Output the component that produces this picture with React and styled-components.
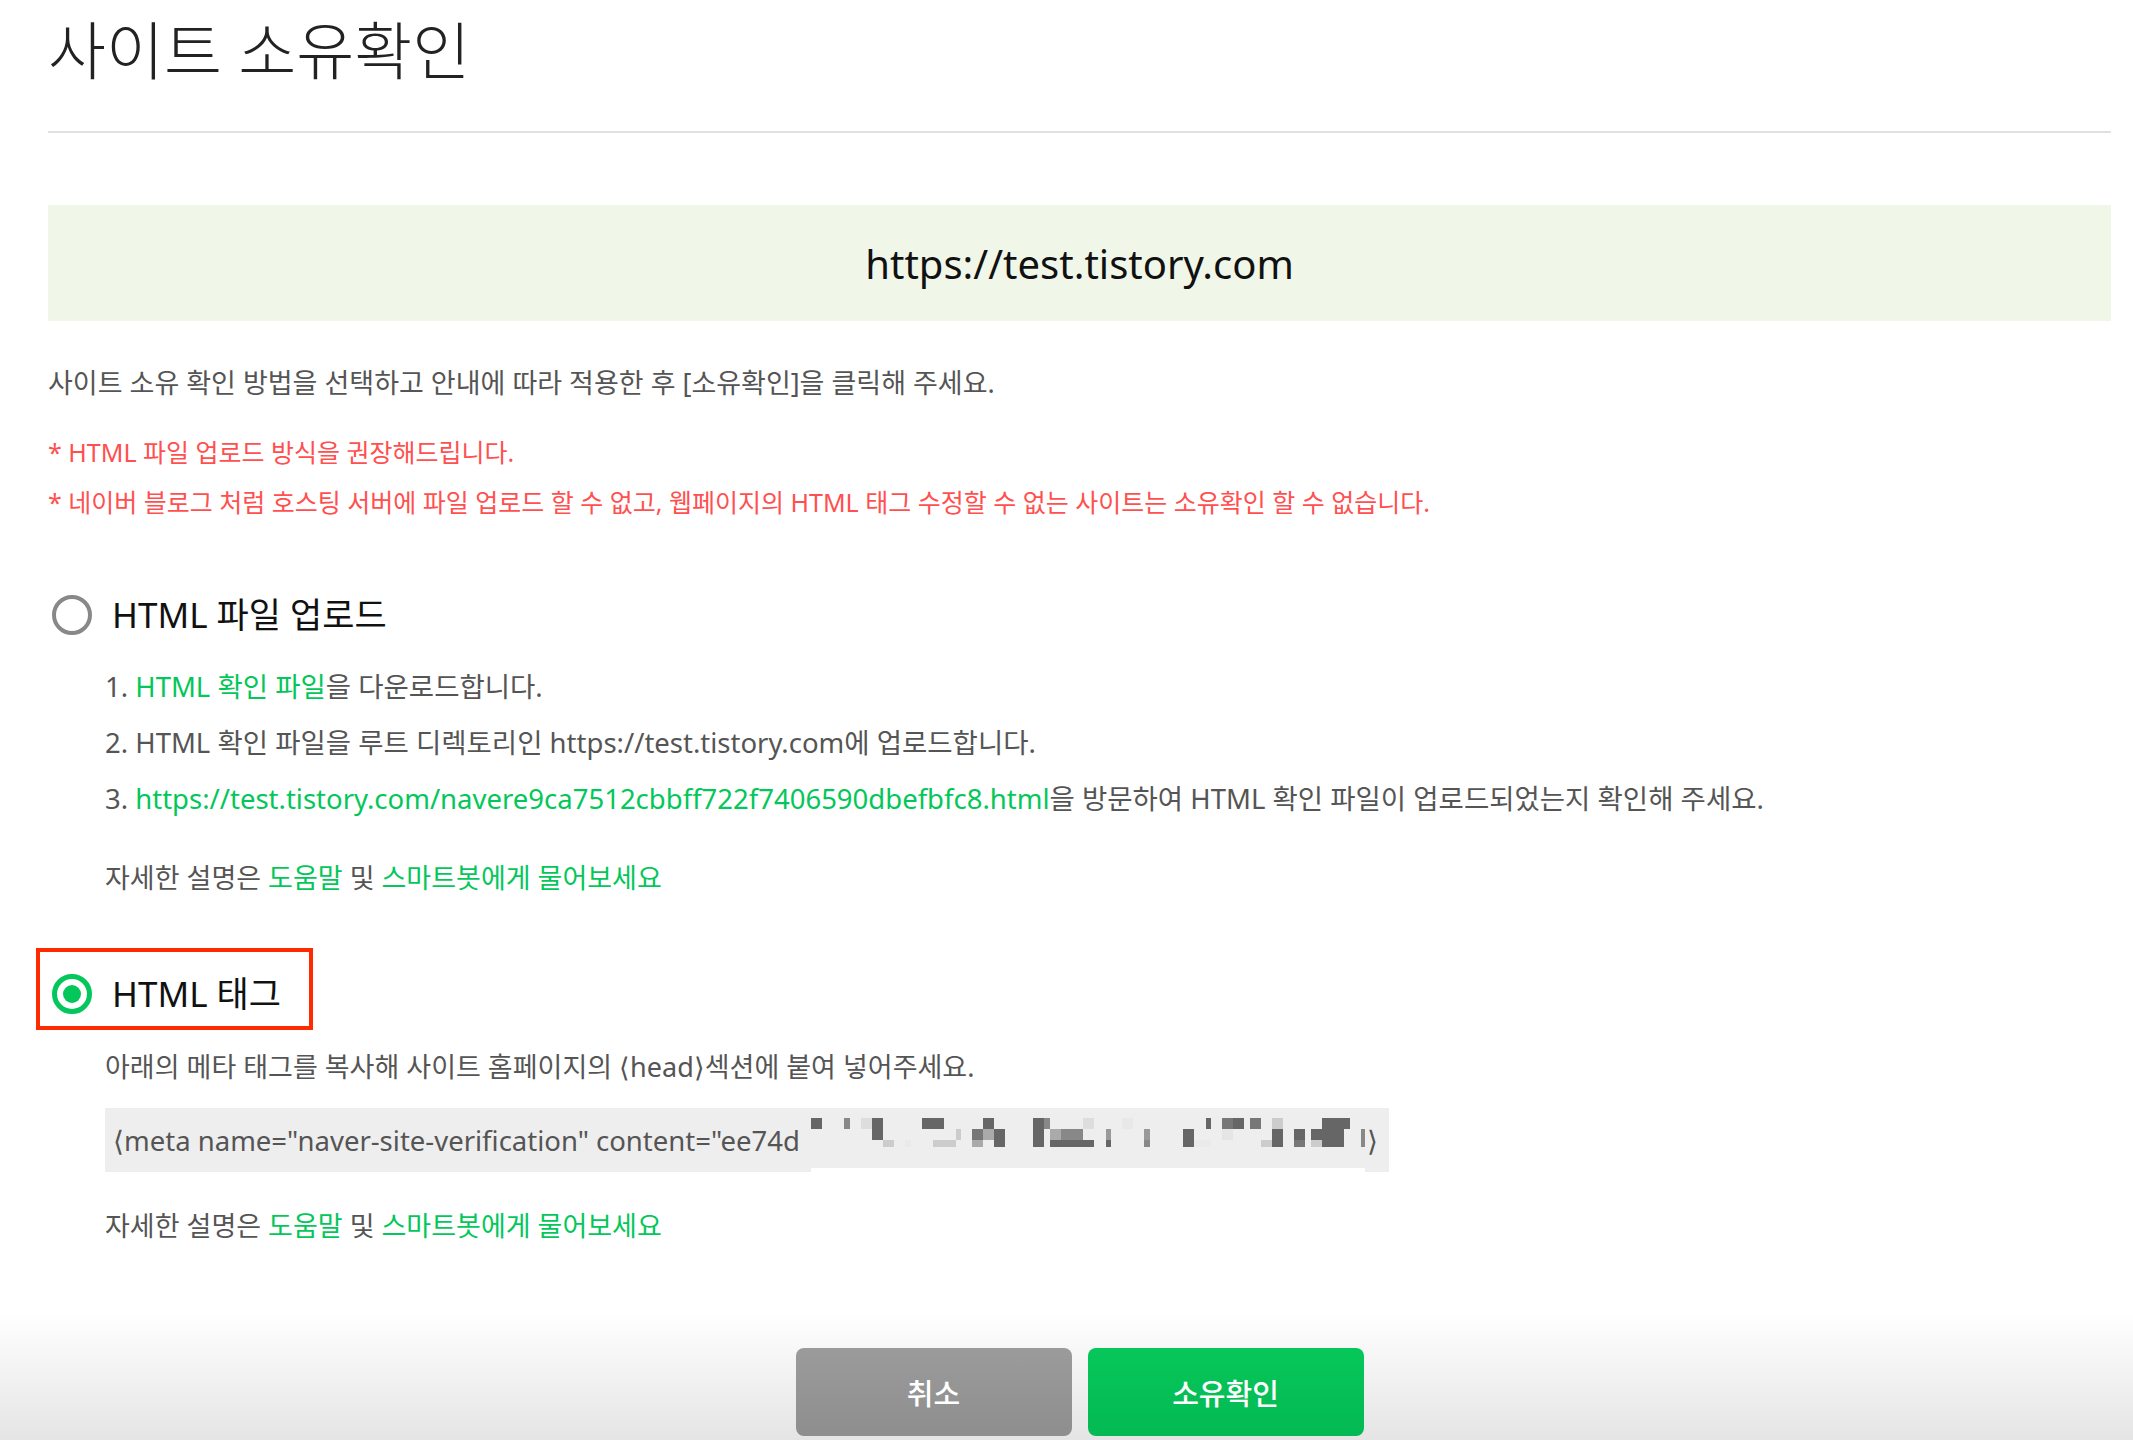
import styled, { createGlobalStyle } from "styled-components";

const GlobalStyle = createGlobalStyle`
  body {
    margin: 0;
    background: #fff;
    font-family: "Noto Sans", "Noto Sans CJK KR", sans-serif;
  }
`;

// 모자이크 처리된 메타 태그 값 (x, 폭, 색) - 행별
const MOSAIC = [
  { y: 10, h: 11, cells: [[0,11,"#666"],[33,6,"#888"],[50,11,"#ddd"],[61,11,"#666"],[111,22,"#666"],[172,11,"#666"],[222,11,"#666"],[233,6,"#888"],[272,11,"#ddd"],[311,11,"#e8e8e8"],[395,5,"#666"],[411,11,"#777"],[422,11,"#666"],[439,11,"#777"],[461,11,"#ccc"],[511,28,"#666"]] },
  { y: 21, h: 11, cells: [[61,11,"#666"],[145,5,"#ccc"],[161,11,"#777"],[172,11,"#aaa"],[183,11,"#666"],[222,11,"#666"],[239,11,"#aaa"],[250,11,"#888"],[261,11,"#888"],[295,5,"#999"],[333,6,"#999"],[372,11,"#666"],[411,11,"#e5e5e5"],[461,11,"#666"],[483,11,"#666"],[500,11,"#666"],[511,22,"#666"],[550,4,"#888"]] },
  { y: 32, h: 7, cells: [[72,11,"#ccc"],[94,6,"#eaeaea"],[122,11,"#ccc"],[133,12,"#ccc"],[161,11,"#aaa"],[183,11,"#666"],[222,11,"#666"],[239,33,"#666"],[272,11,"#666"],[295,5,"#666"],[333,6,"#888"],[372,11,"#666"],[383,17,"#eaeaea"],[450,11,"#ccc"],[461,11,"#666"],[483,11,"#777"],[500,11,"#ccc"],[511,22,"#666"],[550,4,"#888"]] },
];

const Mosaic = () => (
  <MosaicSvg width="554" height="64" viewBox="0 0 554 64">
    <rect x="0" y="0" width="554" height="60" fill="#eeeeee" />
    <rect x="0" y="60" width="554" height="4" fill="#ffffff" />
    {MOSAIC.map((row) =>
      row.cells.map(([x, w, c]) => (
        <rect key={`${row.y}-${x}`} x={x} y={row.y} width={w} height={row.h} fill={c} />
      ))
    )}
  </MosaicSvg>
);

const Radio = ({ checked }) => <RadioCircle checked={checked} />;

const HelpLine = () => (
  <>
    자세한 설명은 <Link>도움말</Link> 및 <Link>스마트봇에게 물어보세요</Link>
  </>
);

const App = () => {
  return (
    <>
      <GlobalStyle />
      <Page>
        <Header>
          <Title>사이트 소유확인</Title>
        </Header>

        <SiteBox>https://test.tistory.com</SiteBox>

        <Desc>사이트 소유 확인 방법을 선택하고 안내에 따라 적용한 후 [소유확인]을 클릭해 주세요.</Desc>
        <Notice>
          <li>* HTML 파일 업로드 방식을 권장해드립니다.</li>
          <li>* 네이버 블로그 처럼 호스팅 서버에 파일 업로드 할 수 없고, 웹페이지의 HTML 태그 수정할 수 없는 사이트는 소유확인 할 수 없습니다.</li>
        </Notice>

        <Method top="63px">
          <RadioRow>
            <Radio checked={false} />
            <Label>HTML 파일 업로드</Label>
          </RadioRow>
          <MethodBody>
            <Steps>
              <li>1. <Link>HTML 확인 파일</Link>을 다운로드합니다.</li>
              <li>2. HTML 확인 파일을 루트 디렉토리인 https://test.tistory.com에 업로드합니다.</li>
              <li>3. <Link>https://test.tistory.com/navere9ca7512cbbff722f7406590dbefbfc8.html</Link>을 방문하여 HTML 확인 파일이 업로드되었는지 확인해 주세요.</li>
            </Steps>
            <Help top="33px"><HelpLine /></Help>
          </MethodBody>
        </Method>

        <Method top="73px">
          <RadioRow>
            <Marker />
            <Radio checked />
            <Label>HTML 태그</Label>
          </RadioRow>
          <MethodBody>
            <Help top="30px">아래의 메타 태그를 복사해 사이트 홈페이지의 ⟨head⟩섹션에 붙여 넣어주세요.</Help>
            <CodeBox>
              <CodeText>⟨meta name="naver-site-verification" content="ee74d</CodeText>
              <Mosaic />
              <CodeTail>⟩</CodeTail>
            </CodeBox>
            <Help top="36px"><HelpLine /></Help>
          </MethodBody>
        </Method>

        <Footer>
          <Button kind="cancel">취소</Button>
          <Button kind="confirm">소유확인</Button>
        </Footer>
      </Page>
    </>
  );
};

const Page = styled.div`
  padding: 0 22px 0 48px;
`;

const Header = styled.header`
  padding: 10px 0 41px;
  border-bottom: 2px solid #e0e0e0;
`;

const Title = styled.h1`
  margin: 0;
  font-size: 63px;
  font-weight: 300;
  line-height: 80px;
  color: #222;
`;

const SiteBox = styled.div`
  margin-top: 72px;
  height: 116px;
  background: #f0f7e9;
  display: flex;
  align-items: center;
  justify-content: center;
  font-size: 40px;
  color: #111;
`;

const Desc = styled.p`
  margin: 44px 0 0;
  font-size: 27px;
  line-height: 36px;
  color: #555;
`;

const Notice = styled.ul`
  margin: 26px 0 0;
  padding: 0;
  list-style: none;
  font-size: 25px;
  line-height: 50px;
  color: #ff4f4f;
`;

const Method = styled.section`
  margin-top: ${(props) => props.top};
`;

const RadioRow = styled.div`
  position: relative;
  display: flex;
  align-items: center;
  gap: 20px;
  height: 50px;
  padding-left: 4px;
`;

const Marker = styled.div`
  position: absolute;
  left: -12px;
  top: -21px;
  width: 277px;
  height: 82px;
  box-sizing: border-box;
  border: 4px solid #ff2a00;
  pointer-events: none;
`;

const RadioCircle = styled.span`
  width: 40px;
  height: 40px;
  box-sizing: border-box;
  border-radius: 50%;
  border: ${(props) => (props.checked ? "5px solid #03c75a" : "4px solid #888")};
  display: flex;
  align-items: center;
  justify-content: center;
  flex-shrink: 0;

  &::after {
    content: "";
    display: ${(props) => (props.checked ? "block" : "none")};
    width: 18px;
    height: 18px;
    border-radius: 50%;
    background: #03c75a;
  }
`;

const Label = styled.span`
  font-size: 35px;
  line-height: 50px;
  color: #111;
`;

const MethodBody = styled.div`
  padding-left: 57px;
`;

const Steps = styled.ol`
  margin: 19px 0 0;
  padding: 0;
  list-style: none;
  font-size: 27.5px;
  line-height: 56px;
  color: #555;
`;

const Link = styled.a`
  color: #03c75a;
  text-decoration: none;
  cursor: pointer;
`;

const Help = styled.p`
  margin: ${(props) => props.top} 0 0;
  font-size: 27px;
  line-height: 36px;
  color: #555;
`;

const CodeBox = styled.div`
  margin-top: 23px;
  width: 1284px;
  height: 64px;
  box-sizing: border-box;
  padding-left: 8px;
  background: #eee;
  display: flex;
  align-items: center;
`;

const CodeText = styled.span`
  width: 698px;
  white-space: nowrap;
  font-size: 27.5px;
  color: #555;
`;

const MosaicSvg = styled.svg`
  display: block;
  flex-shrink: 0;
  align-self: flex-start;
`;

const CodeTail = styled.span`
  font-size: 27.5px;
  color: #555;
  padding-left: 2px;
`;

const Footer = styled.footer`
  margin: 26px -22px 0 -48px;
  padding: 78px 0 6px 26px;
  background: linear-gradient(to bottom, #fff 0%, #fff 25%, #e4e4e4 100%);
  display: flex;
  justify-content: center;
  gap: 16px;
`;

const Button = styled.button`
  width: 276px;
  height: 88px;
  border: none;
  border-radius: 8px;
  font-family: "Noto Sans", "Noto Sans CJK KR", sans-serif;
  font-size: 29px;
  font-weight: 500;
  color: #fff;
  cursor: pointer;
  background: ${(props) =>
    props.kind === "confirm"
      ? "linear-gradient(to bottom, #06c75a, #04b953)"
      : "linear-gradient(to bottom, #9b9b9b, #8e8e8e)"};
`;

export default App;
